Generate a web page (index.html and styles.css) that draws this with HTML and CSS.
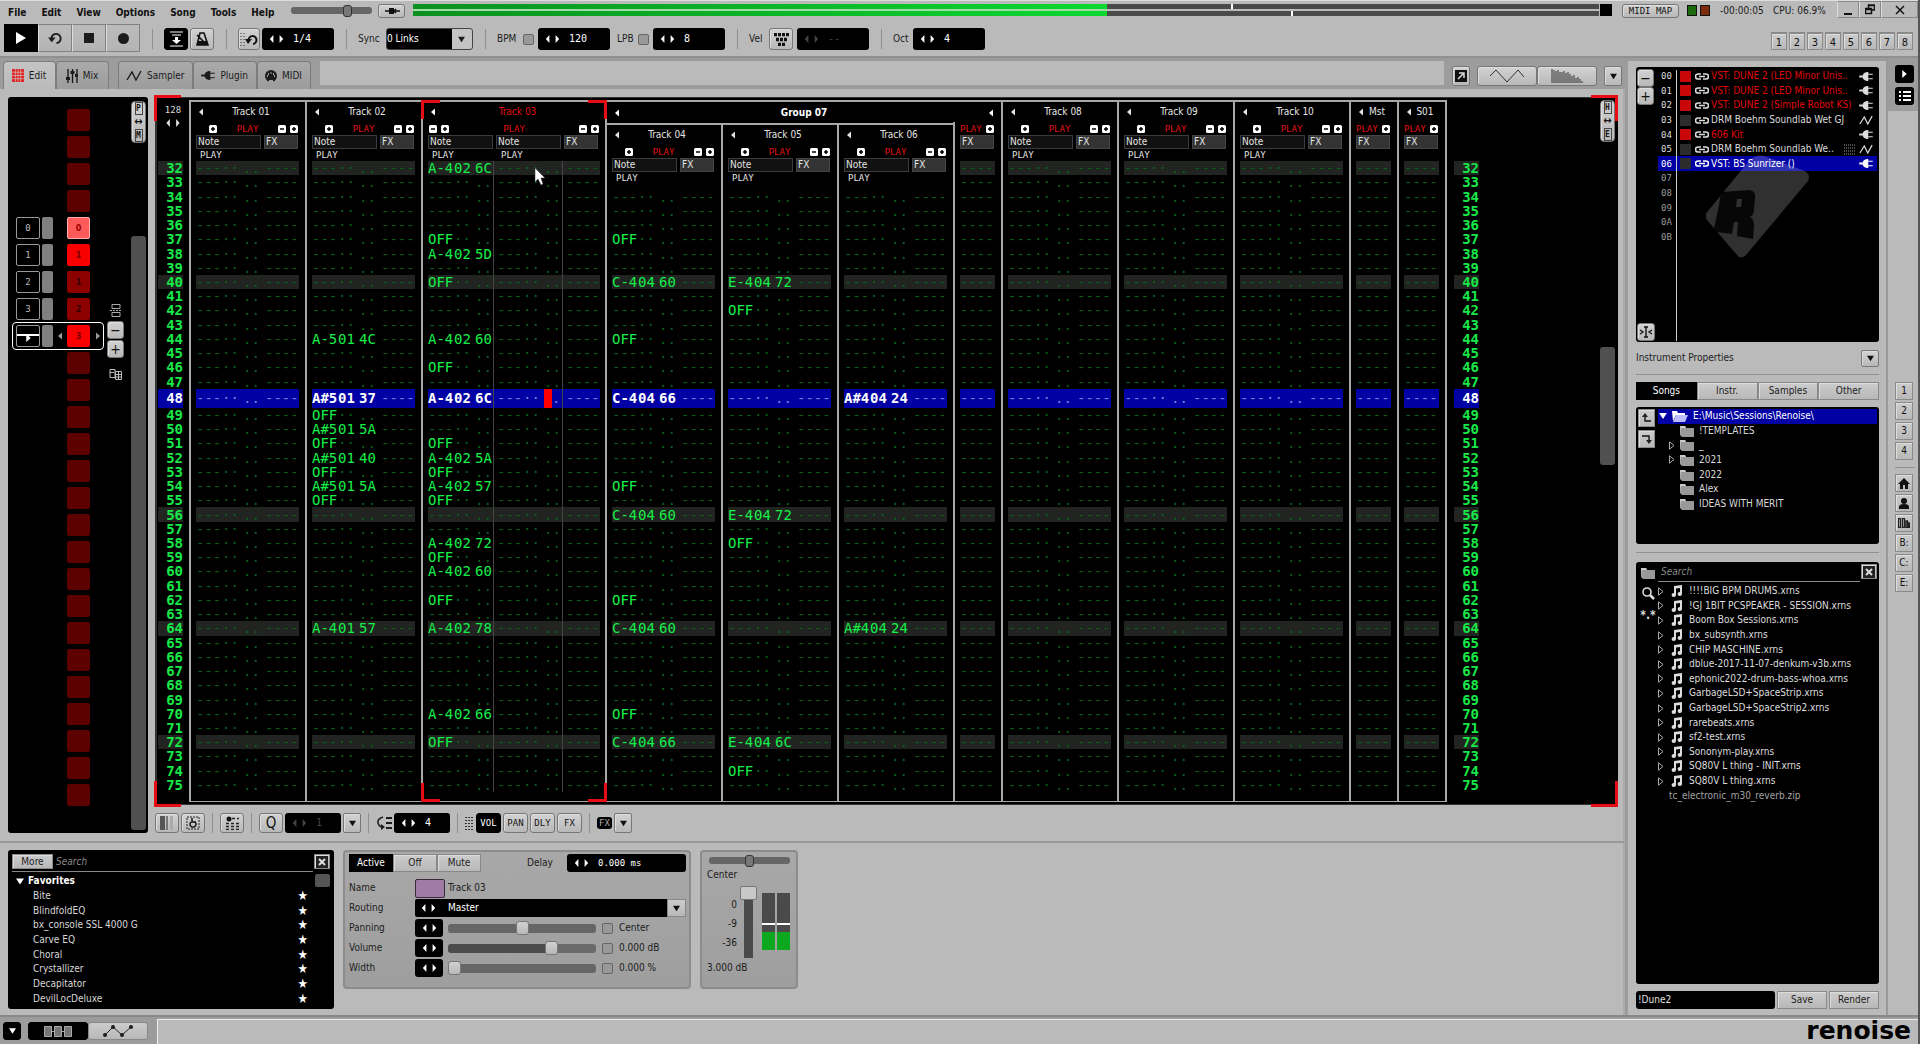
FILE: index.html
```html
<!DOCTYPE html>
<html lang="en">
<head>
<meta charset="utf-8">
<title>Renoise</title>
<link rel="stylesheet" href="styles.css">
</head>
<body>
<svg class="defs" aria-hidden="true">
  <symbol id="tl" viewBox="0 0 5 9"><path d="M5 0v9L0 4.500z"/></symbol>
  <symbol id="tr" viewBox="0 0 5 9"><path d="M0 0v9l5-4.500z"/></symbol>
  <symbol id="td" viewBox="0 0 9 7"><path d="M0 0h9L4.500 7z"/></symbol>
  <symbol id="lr" viewBox="0 0 15 9"><path d="M4 0v9L0 4.500zM11 0v9l4-4.500z"/></symbol>
  <symbol id="plug" viewBox="0 0 15 10"><path d="M0 4h4V3c1-2 3-3 5-3h1v2h5v1h-5v4h5v1h-5v2H9C7 10 5 9 4 7V6H0z"/></symbol>
  <symbol id="wave" viewBox="0 0 16 12"><path d="M1 10L6 2l4 8 5-9" fill="none" stroke="currentColor" stroke-width="1.400"/></symbol>
  <symbol id="link" viewBox="0 0 14 7"><path d="M6 1H3a2 2 0 0 0 0 5h3M8 1h3a2 2 0 0 1 0 5H8M4 3.500h6" fill="none" stroke="currentColor" stroke-width="1.600"/></symbol>
  <symbol id="folder" viewBox="0 0 14 12"><path d="M0 1h5l1 2h8v9H2L0 10z" fill="#999"/><path d="M0 1h5l1 2H1v7z" fill="#ccc"/></symbol>
  <symbol id="open" viewBox="0 0 16 12"><path d="M0 1h5l1 2h7v2H4l-3 6z" fill="#fff"/><path d="M4 5h12l-3 7H1z" fill="#bcbcff"/></symbol>
  <symbol id="note" viewBox="0 0 12 12"><path d="M4 1l8-1v9a2.200 2 0 1 1-2-2V3L6 3.500V10a2.200 2 0 1 1-2-2z"/></symbol>
  <symbol id="exp" viewBox="0 0 6 9"><path d="M.5.800v7.400L5 4.500z" fill="none" stroke="#aaa"/></symbol>
  <symbol id="x" viewBox="0 0 12 12"><path d="M0 0h12v12H0z"/><path d="M3 3l6 6M9 3l-6 6" stroke="#ddd" stroke-width="2"/></symbol>
  <symbol id="loop" viewBox="0 0 16 14"><path d="M4 9A5 5 0 1 1 9 12" fill="none" stroke="currentColor" stroke-width="2"/><path d="M0 6h8l-4 5z"/></symbol>
  <symbol id="min" viewBox="0 0 8 8"><rect width="8" height="8" rx="1.500" fill="#fff"/><path d="M2 4h4" stroke="#000" stroke-width="1.500"/></symbol>
  <symbol id="plus" viewBox="0 0 8 8"><rect width="8" height="8" rx="1.500" fill="#fff"/><path d="M2 4h4M4 2v4" stroke="#000" stroke-width="1.500"/></symbol>
  <symbol id="grid" viewBox="0 0 11 12"><path d="M0 0h11v12H0z"/><path d="M3 0v12M5.500 0v12M8 0v12M0 3h11M0 6h11M0 9h11" stroke="#ccc" stroke-width=".6"/></symbol>
</svg>

<header class="menubar">
  <nav class="menu"><button>File</button><button>Edit</button><button>View</button><button>Options</button><button>Song</button><button>Tools</button><button>Help</button></nav>
  <input class="range master" type="range" value="72" aria-label="Master volume">
  <button class="btn small wide" aria-label="Audio device"><svg width="16" height="8"><path d="M1 4h5M10 4h6M12 2l-2 2 2 2" stroke="#111" fill="none" stroke-width="1.500"/><rect x="5" y="1" width="5" height="6"/></svg></button>
  <div class="meter"><i class="track"><b></b><s style="left:69%"></s></i><i class="track"><b></b><s style="left:74%"></s></i></div>
  <div class="clip"></div>
  <button class="btn small midimap">MIDI MAP</button>
  <div class="lamps"><i></i><i class="red"></i></div>
  <span class="time">-00:00:05</span><span class="cpu">CPU: 06.9%</span>
  <div class="window"><button aria-label="Minimize"><svg width="10" height="10"><path d="M1 9h8" stroke="#111" stroke-width="2"/></svg></button><button aria-label="Restore"><svg width="10" height="11"><path d="M3.500 4V1h6v5H7M.5 4.500h6v5h-6zM3 1.500h6M1 5.500h5" fill="none" stroke="#111" stroke-width="1.500"/></svg></button><button aria-label="Close" class="close"><svg width="10" height="10"><path d="M1 1l8 8M9 1L1 9" stroke="#111" stroke-width="1.500"/></svg></button></div>
</header>

<section class="toolbar">
  <div class="transport"><button class="on" aria-label="Play"><svg width="10" height="12"><path d="M0 0v12l10-6z" fill="#fff"/></svg></button><button aria-label="Loop"><svg width="15" height="13"><use href="#loop"/></svg></button><button aria-label="Stop"><svg width="10" height="10"><path d="M0 0h10v10H0z"/></svg></button><button aria-label="Record"><svg width="11" height="11"><circle cx="5.500" cy="5.500" r="5.500"/></svg></button></div>
  <i class="sep"></i>
  <div class="grp g2"><button class="btn on" aria-label="Follow"><svg width="13" height="16"><path d="M0 1h13M2 4h9M0 15h13" stroke="#fff"/><path d="M5 6h3v3h3l-4.500 4L2 9h3z" fill="#fff"/></svg></button><button class="btn" aria-label="Metronome"><svg width="13" height="14"><path d="M4 1h4l4 12H1zM1 3l8 8" fill="none" stroke="#111" stroke-width="1.600"/><path d="M2 9h9l1 4H1z"/></svg></button></div>
  <i class="sep"></i>
  <div class="grp g2"><button class="btn narrow" aria-label="Block loop"><svg width="18" height="15"><path d="M1 1v13M4 1v13" stroke="#333" stroke-dasharray="1 2"/><path d="M9 10a4 4 0 1 1 4 2" fill="none" stroke="#111" stroke-width="2"/><path d="M5 7h7l-4 5z"/></svg></button><span class="spin"><button aria-label="Step"><svg width="15" height="8"><use href="#lr"/></svg></button><input value="1/4" aria-label="Loop size"></span></div>
  <i class="sep"></i>
  <div class="grp"><label class="l23" for="sync">Sync</label><span class="combo"><select id="sync"><option>0 Links</option></select><svg width="7" height="7"><use href="#td"/></svg></span></div>
  <i class="sep"></i>
  <div class="grp"><label class="l22" for="bpm">BPM</label><input type="checkbox" aria-label="BPM automation"><span class="spin"><button aria-label="Change BPM"><svg width="15" height="8"><use href="#lr"/></svg></button><input id="bpm" value="120"></span></div>
  <div class="grp lpb"><label class="l18" for="lpb">LPB</label><input type="checkbox" aria-label="LPB automation"><span class="spin"><button aria-label="Change LPB"><svg width="15" height="8"><use href="#lr"/></svg></button><input id="lpb" value="8"></span></div>
  <i class="sep"></i>
  <div class="grp"><label class="l16" for="vel">Vel</label><button class="btn" aria-label="Keyboard velocity"><svg width="15" height="13"><path d="M0 1.500h15M2 6.500h11M4 11.500h7" stroke="#111" stroke-width="3.500" stroke-dasharray="3 1"/></svg></button><span class="spin off"><button aria-label="Change velocity"><svg width="15" height="8"><use href="#lr"/></svg></button><input id="vel" value="--"></span></div>
  <i class="sep"></i>
  <div class="grp"><label class="l16" for="oct">Oct</label><span class="spin"><button aria-label="Change octave"><svg width="15" height="8"><use href="#lr"/></svg></button><input id="oct" value="4"></span></div>
  <div class="presets"><button>1</button><button>2</button><button>3</button><button>4</button><button>5</button><button>6</button><button>7</button><button>8</button></div>
</section>

<div class="workspace">
  <main class="left">
    <div class="tabband">
      <div class="tabs"><button class="tab sel"><svg class="red" width="12" height="13"><use href="#grid"/></svg>Edit</button><button class="tab"><svg width="12" height="14"><path d="M2 0v14M6.500 0v14M11 0v14" stroke="#111" stroke-width="1.300"/><path d="M0 8h4v3H0zM4.500 2h4v3h-4zM9 5h3v3H9z"/></svg>Mix</button></div>
      <div class="tabs"><button class="tab"><svg width="16" height="12"><use href="#wave"/></svg>Sampler</button><button class="tab"><svg width="14" height="9"><use href="#plug"/></svg>Plugin</button><button class="tab"><svg width="12" height="12"><circle cx="6" cy="6" r="6"/><path d="M2 6h1M3 4h1M5.500 3h1M8 4h1M9 6h1M4 11h4" stroke="#ccc" stroke-width="1.500"/></svg>MIDI</button></div>
      <div class="info"></div>
      <div class="scopes"><button class="btn sq" aria-label="Detach"><svg width="12" height="12"><path d="M0 0h12v12H0z"/><path d="M3 9l5-5M4 3h5v5" fill="none" stroke="#ddd" stroke-width="1.500"/></svg></button><span class="pair"><button class="btn" aria-label="Scope"><svg width="36" height="14"><path d="M1 7l6-6 11 12 11-12 6 7" fill="none" stroke="#333"/></svg></button><button class="btn" aria-label="Spectrum"><svg width="32" height="14"><path d="M1 0v14M3 1v13M5 2v12M7 1v13M9 3v11M11 3v11M13 2v12M15 4v10M17 3v11M19 5v9M21 7v7M23 6v8M25 9v5M27 8v6M29 10v4M31 12v2" stroke="#333"/></svg></button></span><button class="btn dd" aria-label="More"><svg width="7" height="7"><use href="#td"/></svg></button></div>
    </div>

    <div class="editarea">
      <aside class="seq">
        <div class="slots" id="slots"></div>
        <div class="seqtools"><svg width="12" height="15" fill="none" stroke="#aaa"><path d="M2 1.500h8v4H2zM2 9.500h8v4H2z"/><path d="M0 7.500h12" stroke-dasharray="2 1"/></svg><button class="btn">−</button><button class="btn">+</button><svg width="14" height="12" fill="none" stroke="#bbb"><path d="M1 1.500h5v8H1zM1 4.500h4M6.500 3.500h6v8h-6zM6 6.500h7M6 9h7M9.500 3v8"/></svg></div>
        <div class="seqscroll"><button class="btn flip" aria-label="Pattern matrix"><span>P</span><em>↔</em><span>M</span></button><i></i></div>
      </aside>
      <div class="pattern">
        <section class="editor">
          <div class="tracks" id="tracks"></div>
          <div class="scroll"><button class="btn flip" aria-label="Headers"><span>H</span><em>↔</em><span>E</span></button><i></i></div>
          <b class="c tl"></b><b class="c tr"></b><b class="c bl"></b><b class="c br"></b>
        </section>
        <div class="pbar">
          <button class="btn" aria-label="Show matrix"><svg width="14" height="14"><path d="M0 0h5v14H0z" fill="#555"/><path d="M6 0h2v14H6z" fill="#777"/><path d="M10 0h3v14h-3z" fill="#aaa"/></svg></button><button class="btn" aria-label="Show options"><svg width="14" height="14"><path d="M1 1h12v12H1z" fill="none" stroke="#222" stroke-dasharray="2 1"/><path d="M5 6a3 3 0 1 0 4 0M6 2v4h4" fill="none" stroke="#111" stroke-width="1.500"/></svg></button>
          <i class="sep"></i>
          <button class="btn" aria-label="Advanced edit"><svg width="13" height="14"><circle cx="3" cy="3" r="2.500"/><path d="M6 2.500h7M0 7.500h13M0 10.500h13M0 13.500h13" stroke="#222" stroke-width="1.500" stroke-dasharray="3 2"/></svg></button>
          <i class="sep"></i>
          <button class="btn q">Q</button><span class="spin off"><button aria-label="Quantize"><svg width="15" height="8"><use href="#lr"/></svg></button><input value="1" aria-label="Quantize lines"></span><button class="btn dd" aria-label="Quantize menu"><svg width="7" height="7"><use href="#td"/></svg></button>
          <i class="sep"></i>
          <svg width="16" height="14"><path d="M7 1Q1 3 2 7q1 4 5 4" fill="none" stroke="#222" stroke-width="1.600"/><path d="M5 8l4 3-4 3zM10 1h6v2h-6zM10 6h6v2h-6zM10 11h6v2h-6z"/></svg><span class="spin"><button aria-label="Edit step"><svg width="15" height="8"><use href="#lr"/></svg></button><input value="4" aria-label="Edit step"></span>
          <i class="sep"></i>
          <svg width="9" height="14"><path d="M0 1.500h9M0 4.500h9M0 7.500h9M0 10.500h9M0 13.500h9" stroke="#333" stroke-dasharray="2 1"/></svg><button class="btn pix on">VOL</button><button class="btn pix">PAN</button><button class="btn pix">DLY</button><button class="btn pix">FX</button>
          <i class="sep"></i>
          <span class="fxicon pix">FX</span><button class="btn dd" aria-label="FX menu"><svg width="7" height="7"><use href="#td"/></svg></button>
        </div>
      </div>
    </div>

    <div class="bottom">
      <section class="favs">
        <div class="search"><button class="flat">More</button><input placeholder="Search" aria-label="Search devices"><button class="flat xb" aria-label="Clear"><svg width="12" height="12"><use href="#x"/></svg></button></div>
        <ul><li class="head"><svg width="8" height="7"><use href="#td"/></svg>Favorites</li><li>Bite<b>★</b></li><li>BlindfoldEQ<b>★</b></li><li>bx_console SSL 4000 G<b>★</b></li><li>Carve EQ<b>★</b></li><li>Choral<b>★</b></li><li>Crystallizer<b>★</b></li><li>Decapitator<b>★</b></li><li>DevilLocDeluxe<b>★</b></li></ul>
        <i class="thumb"></i>
      </section>
      <section class="card dsp">
        <div class="line first"><div class="seg"><button class="on">Active</button><button>Off</button><button>Mute</button></div><label for="delay">Delay</label><span class="spin"><button aria-label="Change delay"><svg width="15" height="8"><use href="#lr"/></svg></button><input id="delay" value="0.000 ms"></span></div>
        <div class="line"><label for="tname">Name</label><button class="swatch" aria-label="Track colour"></button><input id="tname" class="bare" value="Track 03"></div>
        <div class="line"><label for="route">Routing</label><span class="route"><svg width="15" height="8"><use href="#lr"/></svg><select id="route"><option>Master</option></select><i><svg width="7" height="7"><use href="#td"/></svg></i></span></div>
        <div class="line"><label for="pan">Panning</label><button class="lrb" aria-label="Step panning"><svg width="15" height="8"><use href="#lr"/></svg></button><input class="range fat" id="pan" type="range" value="50"><input type="checkbox" aria-label="Automate panning"><span>Center</span></div>
        <div class="line"><label for="volu">Volume</label><button class="lrb" aria-label="Step volume"><svg width="15" height="8"><use href="#lr"/></svg></button><input class="range fat vol" id="volu" type="range" value="72"><input type="checkbox" aria-label="Automate volume"><span>0.000 dB</span></div>
        <div class="line"><label for="wid">Width</label><button class="lrb" aria-label="Step width"><svg width="15" height="8"><use href="#lr"/></svg></button><input class="range fat" id="wid" type="range" value="0"><input type="checkbox" aria-label="Automate width"><span>0.000 %</span></div>
      </section>
      <section class="card post">
        <input class="range postpan" type="range" value="50" aria-label="Post panning"><span>Center</span>
        <div class="fader"><div class="scale"><span>0</span><span>-9</span><span>-36</span></div><input class="vert" type="range" value="100" aria-label="Post volume"><div class="vu"><i></i><i></i></div></div>
        <span>3.000 dB</span>
      </section>
    </div>
  </main>

  <aside class="right">
    <section class="insts">
      <div class="pm"><button class="btn">−</button><button class="btn">+</button></div>
      <svg class="mark" viewBox="0 0 103 104" width="103" height="104"><path d="M42 8q7-8 16-6l41 15q6 4 3 10L40 101q-5 5-9 0L1 66q-3-5 1-9z" fill="#fff" fill-opacity=".19"/><path d="M15 38l29-2q6 1 5 8l-1 12q0 5-4 7 4 2 4 8l-1 14-16-3 1-14h-4l-2 12-16-2-3 1 6-28zM31 45l-1 8h5l1-8z" fill="#000" fill-opacity=".85"/></svg>
      <ol id="insts"></ol>
      <button class="btn caret" aria-label="Rename"><svg width="14" height="12"><path d="M1 4l3 2-3 2M13 4l-3 2 3 2M5 1h4M5 11h4M7 1v10" fill="none" stroke="#111" stroke-width="1.400"/></svg></button>
    </section>
    <div class="prop"><span>Instrument Properties</span><button class="btn dd" aria-label="Expand"><svg width="7" height="7"><use href="#td"/></svg></button></div>
    <div class="seg browse"><button class="on">Songs</button><button>Instr.</button><button>Samples</button><button>Other</button></div>
    <section class="tree">
      <div class="nav"><button class="flat" aria-label="Up"><svg width="10" height="10"><path d="M3 2v6h6" fill="none" stroke="#111" stroke-width="1.400"/><path d="M0 4l3-4 3 4z"/></svg></button><button class="flat" aria-label="Down"><svg width="10" height="10"><path d="M0 2h7v5" fill="none" stroke="#111" stroke-width="1.400"/><path d="M4 6l3 4 3-4z"/></svg></button></div>
      <ul>
        <li class="root"><svg width="8" height="6"><use href="#td"/></svg><svg width="16" height="12"><use href="#open"/></svg>E:\Music\Sessions\Renoise\</li>
        <li><i></i><svg width="14" height="12"><use href="#folder"/></svg>!TEMPLATES</li>
        <li><i><svg width="6" height="9"><use href="#exp"/></svg></i><svg width="14" height="12"><use href="#folder"/></svg>_</li>
        <li><i><svg width="6" height="9"><use href="#exp"/></svg></i><svg width="14" height="12"><use href="#folder"/></svg>2021</li>
        <li><i></i><svg width="14" height="12"><use href="#folder"/></svg>2022</li>
        <li><i></i><svg width="14" height="12"><use href="#folder"/></svg>Alex</li>
        <li><i></i><svg width="14" height="12"><use href="#folder"/></svg>IDEAS WITH MERIT</li>
      </ul>
    </section>
    <section class="files">
      <div class="fside"><svg width="14" height="12"><use href="#folder"/></svg><svg width="13" height="13"><circle cx="5" cy="5" r="4" fill="none" stroke="#ddd" stroke-width="1.600"/><path d="M8 8l4 4" stroke="#ddd" stroke-width="2.500"/></svg><span>*.*</span></div>
      <div class="fmain"><div class="search"><input placeholder="Search" aria-label="Search files"><button class="flat xb" aria-label="Clear"><svg width="12" height="12"><use href="#x"/></svg></button></div><ul id="files"></ul></div>
    </section>
    <div class="save"><input value="!Dune2" aria-label="File name"><button class="flat">Save</button><button class="flat">Render</button></div>
  </aside>

  <aside class="strip">
    <div class="dark"><button aria-label="Collapse"><svg width="5" height="8"><use href="#tr"/></svg></button><button aria-label="List"><svg width="12" height="12"><path d="M0 2h2M4 2h8M0 6h2M4 6h8M0 10h2M4 10h8" stroke="#fff" stroke-width="2"/></svg></button></div>
    <div class="quick"><button>1</button><button>2</button><button>3</button><button>4</button><hr><button aria-label="Home"><svg width="12" height="11"><path d="M6 0l6 6h-2v5H7V7H5v4H2V6H0z"/></svg></button><button aria-label="User"><svg width="12" height="11"><circle cx="6" cy="3" r="3"/><path d="M1 11V9q0-3 5-3t5 3v2z"/></svg></button><button aria-label="Library"><svg width="12" height="10"><path d="M.5.500h2v9h-2zM4.500.500h2v9h-2zM8 3h1.500v6.500H8zM10.500 5h1v4.500h-1z" fill="none" stroke="#222" stroke-width="1.300"/></svg></button><button>B:</button><button>C:</button><button>E:</button></div>
  </aside>
</div>

<footer class="status">
  <div class="views"><button class="blk" aria-label="Toggle lower panel"><svg width="7" height="8"><use href="#td"/></svg></button><button class="on" aria-label="Devices"><svg width="29" height="11" fill="#777" stroke="#aaa"><path d="M.5.500h7v10h-7zM10.500.500h7v10h-7zM20.500.500h7v10h-7zM7 5.500h3M17 5.500h3"/></svg></button><button aria-label="Automation"><svg width="30" height="12"><path d="M2 10l8-8 9 8 9-8" fill="none" stroke="#222"/><circle cx="2" cy="10" r="2"/><circle cx="10" cy="2" r="2"/><circle cx="19" cy="10" r="2"/><circle cx="28" cy="2" r="2"/></svg></button></div>
  <div class="msg"><span class="logo">renoise</span></div>
</footer>
<script src="app.js"></script>
</body>
</html>
```
FILE: styles.css
```css
:root { --ui: "DejaVu Sans Condensed", "DejaVu Sans", sans-serif; --mono: "DejaVu Sans Mono", monospace; --bg: #bababa; --mid: #9c9c9c; --edge: #858585; --lite: #cfcfcf; }
* { box-sizing: border-box; }
body { margin: 0; height: 100vh; display: flex; flex-direction: column; background: var(--bg); font: 10px/14px var(--ui); color: #1c1c1c; overflow: hidden; border-right: 2px solid #555; fill: currentColor; }
button, input, select { font: inherit; color: inherit; padding: 0; margin: 0; border: 0; background: none; border-radius: 0; min-width: 0; outline: 0; }
button { display: flex; align-items: center; justify-content: center; flex: none; white-space: nowrap; }
ul, ol { list-style: none; margin: 0; padding: 0; }
svg { flex: none; display: block; }
i { font-style: normal; }
.defs { position: absolute; width: 0; height: 0; }
.pix { font: 9px/12px var(--mono); }
.btn { height: 22px; width: 24px; border: 1px solid #777; border-radius: 3px; background: linear-gradient(#d2d2d2, #b8b8b8); box-shadow: inset 1px 1px #ddd; color: #111; }
.btn.on { background: #000; color: #fff; box-shadow: none; border-color: #000; }
.btn.dd { width: 18px; border-radius: 2px; }
.btn.narrow { width: 22px; }
.flat { background: linear-gradient(#ccc, #b8b8b8); border: 1px solid #8a8a8a; color: #222; box-shadow: inset 1px 1px #ddd; }
.sep { width: 1px; height: 20px; background: #909090; margin: 0 12px; flex: none; }
.red { color: #e02020; }

.menubar { height: 22px; flex: none; display: flex; align-items: flex-start; padding-top: 3px; border-top: 1px solid #ddd; }
.menu { display: flex; gap: 15px; padding-left: 8px; width: 291px; font-weight: bold; color: #111; }
.menu button { height: 18px; }
input.range { appearance: none; height: 7px; background: #666; border-radius: 3px; }
input.range::-webkit-slider-thumb { appearance: none; width: 9px; height: 12px; border-radius: 3px; background: #777; border: 1px solid #333; }
.master { width: 81px; margin: 3px 6px 0 0; }
.btn.small { height: 14px; }
.btn.wide { width: 27px; margin-right: 8px; }
.meter { flex: 1; display: grid; gap: 2px; height: 12px; background: linear-gradient(to right, #a0dca6 58.5%, #bababa 58.5%); }
.track { display: block; background: #4a4a4a; position: relative; }
.meter .track b { display: block; height: 100%; width: 58.5%; background: linear-gradient(to right, #0c9020, #0cd830); }
.track s { position: absolute; width: 2px; top: 0; bottom: 0; background: #fff; }
.clip { width: 12px; height: 12px; background: #000; margin: 0 10px 0 1px; }
.midimap { width: 57px; margin-right: 8px; font: 9px/12px var(--mono); }
.lamps { display: flex; gap: 3px; margin-top: 1px; }
.lamps i { width: 10px; height: 11px; background: #1c6a0c; border: 1px solid #111; }
.lamps .red { background: #7c2c0c; }
.time { margin: 0 9px 0 10px; width: 44px; }
.cpu { width: 64px; }
.time, .cpu { white-space: nowrap; }
.window { display: flex; margin-top: -3px; margin-left: auto; }
.window button { width: 22px; height: 17px; border: 1px solid #888; border-left-color: #ddd; }
.window .close { width: 37px; }

.toolbar { height: 34px; flex: none; display: flex; align-items: center; padding: 0 5px 0 4px; }
.transport { display: flex; margin-top: -2px; }
.transport button { width: 34px; height: 28px; border: 1px solid #808080; border-left-color: #ddd; background: linear-gradient(#bcbcbc, #b4b4b4); }
.transport .on { background: #000; border-color: #000; }
.grp { display: flex; align-items: center; gap: 4px; }
.g2 { gap: 2px; }
.lpb { margin-left: 7px; }
.toolbar .sep { margin: 0 11px 0 12px; }
.spin { display: flex; align-items: center; width: 72px; height: 22px; background: #000; border-radius: 3px; color: #fff; font-family: var(--mono); flex: none; }
.spin button { width: 29px; }
.spin input { flex: 1; width: 30px; padding-left: 2px; }
.spin.off { color: #444; }
.l23 { width: 24px; } .l22 { width: 22px; } .l18 { width: 17px; } .l16 { width: 16px; }
.combo { position: relative; display: flex; width: 87px; height: 22px; background: linear-gradient(to right, #000 65px, #c4c4c4 65px); border: 1px solid #444; border-radius: 3px; }
.combo select { appearance: none; color: #fff; width: 64px; }
.combo option, .route option { background: #000; }
.combo svg { position: absolute; right: 7px; top: 7px; }
input[type=checkbox] { appearance: none; width: 11px; height: 11px; border: 1px solid #666; border-radius: 2px; background: #999; flex: none; }
.presets { margin: 4px 0 0 auto; display: flex; gap: 2px; }
.presets button, .quick button { width: 16px; height: 18px; border: 1px solid #8a8a8a; background: linear-gradient(#ccc, #b8b8b8); box-shadow: inset 1px 1px #ddd; font-size: 11px; color: #111; }
.presets button { border-top-width: 2px; padding-top: 3px; }

.workspace { flex: 1; min-height: 0; display: flex; background: var(--mid); border-top: 2px solid #909090; }
.left { flex: 1; min-width: 0; display: flex; flex-direction: column; }
.tabband { height: 31px; flex: none; display: flex; padding: 3px 6px 0 3px; }
.tabs { display: flex; margin-right: 9px; }
.tab { height: 28px; gap: 5px; padding: 0 8px 0 7px; border: 1px solid #7c7c7c; border-bottom: 0; border-radius: 4px 4px 0 0; background: linear-gradient(#aaa, #9c9c9c); min-width: 53px; }
.tab.sel { background: linear-gradient(#c4c4c4, var(--bg)); }
.info { flex: 1; height: 24px; background: var(--bg); margin-right: 8px; }
.scopes { display: flex; gap: 7px; padding-top: 5px; align-items: flex-start; }
.scopes .btn { height: 20px; width: 60px; }
.scopes .sq, .scopes .dd { width: 18px; height: 20px; border-radius: 2px; }
.pair { display: flex; }

.editarea { flex: 1; min-height: 0; display: flex; background: var(--bg); margin-right: 3px; padding: 8px 5px 8px 8px; border-right: 2px solid #aaa; border-bottom: 2px solid #999; }
.seq { background: #000; width: 140px; border-radius: 3px; display: flex; margin-right: 7px; flex: none; padding-left: 8px; }
.slots { width: 88px; display: flex; flex-direction: column; gap: 5px; padding-top: 12px; margin-right: 3px; }
.slot { display: grid; grid-template-columns: 24px 11px 10px 23px 12px; column-gap: 2px; height: 22px; position: relative; justify-items: center; align-items: center; color: #bbb; font: 9px/12px var(--mono); }
.slot span, .slot i, .slot b { width: 100%; height: 22px; border-radius: 2px; display: grid; place-items: center; }
.slot span { border: 1px solid #999; grid-column: 1; }
.slot i { background: #808080; grid-column: 2; }
.slot b { background: #5c0000; grid-column: 4; color: #300; font-weight: bold; font-family: var(--ui); }
.slot b.mid { background: #8c0000; }
.slot b.hot { background: #f80000; color: #700; }
.slot b.sel { background: #ff5a5a; border: 1px solid #ffb0b0; color: #900; }
.slot svg { color: #999; }
.slot.cur::after { content: ""; position: absolute; inset: -3px 0 -3px -4px; border: 1px solid #fff; border-radius: 4px; }
.slot.cur span { background: linear-gradient(transparent 8px, #fff 8px, #fff 10px, transparent 10px); }
.slot.cur span svg { color: #fff; margin-top: 4px; }
.seqtools { width: 17px; margin-right: 7px; padding-top: 206px; display: flex; flex-direction: column; align-items: center; gap: 1px; }
.seqtools > svg:last-child { margin-top: 9px; }
.seqtools > svg { margin-bottom: 2px; }
.seqtools .btn, .pm .btn { width: 17px; height: 18px; font-size: 14px; }
.seqscroll { width: 15px; padding: 4px 0 3px; display: flex; flex-direction: column; }
.flip { width: 15px; height: 42px; flex-direction: column; border-radius: 4px; font: bold 8px/11px var(--mono); }
.flip em { font: bold 11px/14px var(--ui); }
.flip span { border: 1px solid #444; width: 8px; }
.seqscroll i { flex: 1; margin-top: 93px; background: #505050; border-radius: 3px; }

.pattern { flex: 1; min-width: 0; display: flex; flex-direction: column; gap: 8px; }
.editor { flex: 1; min-height: 0; background: #000; border: 2px solid #333; border-width: 1px 0 1px 2px; position: relative; display: flex; padding: 2px 0; }
.tracks { flex: 1; display: flex; min-width: 0; }
.c { position: absolute; width: 27px; height: 26px; border: 0 solid #e80c14; pointer-events: none; }
.c.tl { left: -3px; top: -3px; border-width: 3px 0 0 3px; }
.c.tr { right: 0; top: -3px; border-width: 3px 3px 0 0; }
.c.bl { left: -3px; bottom: -3px; border-width: 0 0 3px 3px; }
.c.br { right: 0; bottom: -3px; border-width: 0 3px 3px 0; }
.scroll { width: 15px; margin-right: 3px; }
.scroll i { display: block; height: 118px; background: #505050; border-radius: 3px; margin-top: 205px; }
.nums { width: 32px; display: flex; flex-direction: column; padding-bottom: 10px; flex: none; color: #18e848; font: 14px/14px var(--mono); }
.nums.end { padding-left: 6px; }
.nums header { height: 61px; color: #ddd; font: 9px/18px var(--mono); display: flex; flex-direction: column; align-items: center; padding-top: 1px; flex: none; }
.nums .row { width: 25px; margin-left: 1px; justify-content: flex-end; -webkit-text-stroke: 0; font-weight: bold; }
.rows { flex: 1; min-height: 0; display: flex; flex-direction: column; }
.row { flex: 1 1 0; min-height: 0; display: flex; align-items: center; white-space: pre; }
.row.beat { background: #212421; }
.row.now { flex: 0 0 19px; background: #0000a4; color: #fff; font-weight: bold; }
.trk { flex: none; border-left: 2px solid #a8a8a8; border-top: 2px solid #a8a8a8; border-bottom: 1px solid #a8a8a8; display: flex; flex-direction: column; padding: 0 6px 9px 5px; width: 116px; position: relative; }
.trk.two { width: 184px; padding-right: 5px; }
.trk.fx { width: 48px; }
.trk.last { width: 50px; border-right: 2px solid #a8a8a8; }
.hd { height: 59px; flex: none; color: #e4e4e4; font-size: 10px; }
.title { height: 20px; display: flex; align-items: center; padding-left: 3px; }
.title span { flex: 1; text-align: center; }
.ctl { height: 13px; display: flex; align-items: center; justify-content: space-between; color: #e01010; }
.ctl b { font-weight: normal; }
.ctl > span { display: flex; gap: 4px; min-width: 21px; justify-content: flex-end; }
.ctl > span:last-child { padding-right: 1px; }
.fx .ctl > span { min-width: 0; }
.names { display: flex; margin-right: 1px; }
.names > span { width: 65px; margin-right: 3px; height: 14px; border: 1px solid #3c3c3c; background: #111; padding-left: 1px; line-height: 12px; }
.names > .fxn { width: 34px; margin: 0; background: #333; border-color: #444; }
.play2 { display: flex; padding-left: 4px; height: 12px; align-items: center; }
.play2 span { width: 69px; }
.rows.notes { font: 14px/14px var(--mono); color: #14f048; }
.col { width: 69px; display: flex; flex: none; height: 100%; align-items: center; }
.col span, .f { flex: none; }
.col .n { width: 26px; } .col .i { width: 21px; }
.two .col { border-right: 1px solid #444; width: 66px; margin-right: 3px; }
.d { color: #0a5e1c; }
.now .d { color: #7080dc; font-weight: normal; }
.cursor { background: #f00; height: 19px; width: 8px; }
.group { flex: none; width: 396px; display: grid; grid-template-columns: 116px 116px 116px 48px; grid-template-rows: 21px 1fr; border-top: 2px solid #a8a8a8; }
.gtitle { grid-column: 1 / -1; border-left: 2px solid #a8a8a8; display: flex; align-items: center; justify-content: space-between; padding: 0 8px; color: #fff; font-weight: bold; }
.group .trk:not(.fx) .rows { margin-top: -23px; }
.group .trk:not(.fx) .row:nth-child(-n+2) { visibility: hidden; }
.group .fx { border-top: 0; margin-top: -1px; }
.group .fx .title { display: none; }
.group .fx .hd { height: 39px; }
.trk.active .title { color: #e01010; }
.trk.active .title svg { color: #fff; }
.trk.active::before, .trk.active::after { content: ""; position: absolute; left: -2px; right: -2px; height: 19px; pointer-events: none; z-index: 1; }
.trk.active::before { top: -2px; background: linear-gradient(#e80c14, #e80c14) 0 0 / 3px 100% no-repeat, linear-gradient(#e80c14, #e80c14) 100% 0 / 3px 100% no-repeat, linear-gradient(#e80c14, #e80c14) 0 0 / 19px 3px no-repeat, linear-gradient(#e80c14, #e80c14) 100% 0 / 19px 3px no-repeat; }
.trk.active::after { bottom: -1px; background: linear-gradient(#e80c14, #e80c14) 0 0 / 3px 100% no-repeat, linear-gradient(#e80c14, #e80c14) 100% 0 / 3px 100% no-repeat, linear-gradient(#e80c14, #e80c14) 0 100% / 19px 3px no-repeat, linear-gradient(#e80c14, #e80c14) 100% 100% / 19px 3px no-repeat; }
.mouse { position: absolute; left: 111px; top: 66px; z-index: 2; }

.pbar { height: 20px; display: flex; align-items: center; gap: 2px; }
.pbar .btn { height: 20px; }
.pbar .btn.pix { width: 25px; }
.pbar .sep { margin: 0 5px; }
.pbar .spin { width: 56px; height: 20px; }
.pbar .q { font-size: 15px; }
.fxicon { background: #000; color: #aaa; border-radius: 3px; width: 15px; text-align: center; }

.bottom { flex: none; background: var(--bg); display: flex; gap: 9px; padding: 7px 8px 6px; height: 172px; margin-right: 3px; align-items: flex-start; border-right: 2px solid #aaa; }
.favs { width: 326px; height: 159px; background: #000; border-radius: 3px; color: #d8d8d8; padding: 4px; position: relative; }
.search { display: flex; height: 18px; border-bottom: 1px solid #888; padding-bottom: 2px; margin-right: 17px; }
.search .flat { width: 41px; }
.search input { flex: 1; padding-left: 3px; font-style: italic; }
.search input::placeholder { color: #8a8a8a; }
.search .xb { width: 16px; margin-right: -17px; }
.favs ul { height: 132px; display: grid; grid-auto-rows: 1fr; margin-top: 2px; }
.favs li { display: flex; align-items: center; padding: 0 22px 0 21px; justify-content: space-between; }
.favs li.head { padding-left: 4px; gap: 4px; justify-content: flex-start; font-weight: bold; color: #fff; }
.favs li b { font-size: 13px; color: #fff; }
.thumb { position: absolute; right: 4px; top: 24px; width: 15px; height: 13px; background: #555; border-radius: 2px; }
.card { border: 2px solid #8c8c8c; border-radius: 4px; background: linear-gradient(#a8a8a8, #9e9e9e); height: 139px; }
.dsp { width: 348px; padding: 1px 3px 0 4px; display: flex; flex-direction: column; }
.line { height: 20px; display: flex; align-items: center; }
.line label { width: 66px; }
.line.first { margin-bottom: 5px; gap: 0; }
.first label { width: 40px; margin-left: 46px; }
.first .spin { width: 119px; height: 18px; margin-left: auto; font-size: 9px; }
.seg { display: flex; }
.seg button { width: 44px; height: 18px; background: linear-gradient(#ccc, #b8b8b8); border: 1px solid #888; box-shadow: inset 1px 1px #ddd; }
.seg .on { background: #000; color: #fff; border-color: #000; box-shadow: none; }
.swatch { width: 30px; height: 19px; background: #a07ca4; border: 1px solid #3a2a3c; border-radius: 2px; margin-right: 3px; }
.bare { width: 100px; }
.route { flex: 1; height: 18px; background: #000; color: #fff; display: flex; align-items: center; padding-left: 6px; border-radius: 2px; }
.route select { appearance: none; flex: 1; padding-left: 12px; color: #fff; }
.route i { width: 19px; height: 18px; display: grid; place-items: center; background: linear-gradient(#ccc, #b8b8b8); color: #111; border: 1px solid #888; }
.lrb { width: 28px; height: 18px; background: #000; color: #fff; border-radius: 3px; margin-right: 5px; }
input.fat { width: 148px; height: 9px; margin-right: 6px; }
input.vol { background: linear-gradient(to right, #4c4c4c 70%, #6a6a6a 70%); }
input.fat::-webkit-slider-thumb { width: 13px; height: 14px; background: linear-gradient(#d0d0d0, #b8b8b8); border-color: #777; }
.line input[type=checkbox] { margin-right: 6px; }
.post { width: 98px; padding: 5px 6px 0 5px; display: flex; flex-direction: column; }
.postpan { width: 81px; align-self: flex-end; margin-bottom: 4px; }
.fader { display: flex; height: 72px; margin: 4px 0 3px; }
.scale { width: 33px; padding: 12px 3px 0 0; display: flex; flex-direction: column; gap: 5px; text-align: right; }
.vert { writing-mode: vertical-lr; direction: rtl; appearance: none; width: 17px; height: 72px; background: linear-gradient(to right, transparent 4px, #4a4a4a 4px, #4a4a4a 13px, transparent 13px); border-radius: 3px; }
.vert::-webkit-slider-thumb { appearance: none; width: 17px; height: 14px; border: 1px solid #777; border-radius: 2px; background: #c8c8c8; }
.vu { display: flex; gap: 2px; margin: 7px 0 0 5px; }
.vu i { width: 13px; height: 57px; background: linear-gradient(#4a4a4a 30px, #fff 30px, #fff 32px, #4a4a4a 32px, #4a4a4a 39px, #0ca820 39px); }

.right { width: 260px; flex: none; background: var(--bg); margin-top: 3px; padding: 6px 7px 6px 8px; display: flex; flex-direction: column; border-right: 2px solid #999; }
.insts { height: 275px; background: #000; border-radius: 3px; position: relative; display: flex; flex: none; padding: 2px 2px 0 0; }
.pm { width: 22px; padding-left: 1px; }
.caret { position: absolute; left: 1px; bottom: 1px; width: 18px; height: 18px; }
.mark { position: absolute; left: 70px; top: 87px; z-index: 1; }
.insts ol { flex: 1; height: 175px; display: grid; grid-auto-rows: 1fr; color: #ddd; position: relative; }
.insts ol::after { content: ""; position: absolute; left: 18px; top: 1px; height: 271px; width: 1px; background: #ccc; }
.insts li { display: flex; align-items: center; gap: 4px; padding: 0 4px 0 3px; font-size: 10px; }
.insts li > span { width: 15px; font: 9px/12px var(--mono); }
.insts li i { width: 11px; height: 11px; background: #2c2c2c; }
.insts li em { font-style: normal; flex: 1; white-space: nowrap; margin-left: -2px; }
.insts li.muted em { color: #e00808; }
.insts li.muted i { background: #c80808; }
.insts li.cur { background: #0000a4; color: #fff; }
.insts li.empty { color: #999; }
.prop { height: 33px; display: flex; justify-content: space-between; align-items: center; border-bottom: 1px solid #909090; flex: none; }
.prop .btn { height: 17px; }
.browse { margin: 7px 0; flex: none; }
.browse button { flex: 1; height: 18px; }
.tree { height: 137px; background: #000; border-radius: 3px; display: flex; padding: 2px; color: #d8d8d8; flex: none; }
.nav { width: 20px; display: grid; gap: 3px; align-content: start; }
.nav .flat { width: 17px; height: 18px; }
.tree ul { flex: 1; height: 102px; display: grid; grid-auto-rows: 1fr; }
.tree li { display: flex; align-items: center; gap: 5px; padding-left: 11px; }
.tree li i { width: 6px; }
.tree li.root { background: #0000a4; color: #fff; padding-left: 1px; }
.files { flex: 1; min-height: 0; background: #000; border-radius: 3px; margin-top: 18px; display: flex; color: #ddd; padding: 2px; position: relative; }
.files::before { content: ""; position: absolute; left: 0; right: 0; top: -10px; height: 1px; background: #909090; }
.fside { width: 20px; display: flex; flex-direction: column; align-items: center; gap: 8px; padding-top: 3px; }
.fside span { font: bold 12px/14px var(--ui); }
.fmain { flex: 1; }
.fmain ul { height: 219px; display: grid; grid-auto-rows: 1fr; margin-top: 2px; }
.fmain li { display: flex; align-items: center; gap: 7px; }
.fmain li svg:first-child { margin-right: -1px; }
.fmain li.plain { color: #a0a0a0; padding-left: 11px; }
.save { display: flex; height: 18px; gap: 2px; margin-top: 7px; flex: none; }
.save input { flex: 1; background: #000; color: #e0e0e0; border-radius: 3px; padding-left: 2px; }
.save .flat { width: 50px; }
.strip { width: 30px; flex: none; display: flex; flex-direction: column; }
.dark { height: 53px; padding: 7px 0 0 7px; display: grid; gap: 4px; align-content: start; }
.dark button { width: 19px; height: 18px; background: #000; border-radius: 3px; color: #fff; }
.quick { flex: 1; background: var(--bg); padding: 271px 0 0 7px; display: flex; flex-direction: column; gap: 2px; }
.quick button { width: 18px; font-size: 10px; }
.quick hr { width: 20px; height: 1px; border: 0; margin: 5px 0 4px; background: #909090; }

.status { height: 29px; flex: none; display: flex; background: var(--mid); border-top: 2px solid #888; }
.views { width: 157px; padding: 5px 0 0 3px; display: flex; }
.views button { height: 18px; width: 60px; background: linear-gradient(#ccc, #b8b8b8); border: 1px solid #888; border-radius: 3px; }
.views .blk { width: 18px; background: #000; margin-right: 7px; border-color: #000; color: #fff; }
.views .on { background: #000; border-color: #000; }
.msg { flex: 1; margin-top: 2px; border-top: 1px solid #eee; border-left: 1px solid #eee; background: var(--bg); display: flex; justify-content: flex-end; padding-right: 7px; }
.logo { font: bold 25px/22px "DejaVu Sans", sans-serif; color: #000; }
```
FILE: app.js
```js
const FIRST = 32, LAST = 75, CURRENT = 48;

const notes = {
  2: "44 A-5 01 4C|48 A#5 01 37|49 OFF|50 A#5 01 5A|51 OFF|52 A#5 01 40|53 OFF|54 A#5 01 5A|55 OFF|64 A-4 01 57",
  3: "32 A-4 02 6C|37 OFF|38 A-4 02 5D|40 OFF|44 A-4 02 60|46 OFF|48 A-4 02 6C|51 OFF|52 A-4 02 5A|53 OFF|54 A-4 02 57|55 OFF|58 A-4 02 72|59 OFF|60 A-4 02 60|62 OFF|64 A-4 02 78|70 A-4 02 66|72 OFF",
  4: "37 OFF|40 C-4 04 60|44 OFF|48 C-4 04 66|54 OFF|56 C-4 04 60|62 OFF|64 C-4 04 60|70 OFF|72 C-4 04 66",
  5: "40 E-4 04 72|42 OFF|56 E-4 04 72|58 OFF|72 E-4 04 6C|74 OFF",
  6: "48 A#4 04 24|64 A#4 04 24"
};

const icon = (id, w, h) => `<svg width="${w}" height="${h}"><use href="#${id}"/></svg>`;
const rowClass = r => "row" + (r === CURRENT ? " now" : r % 8 === 0 ? " beat" : "");

function rows(make, cls = "") {
  let out = `<div class="rows ${cls}">`;
  for (let r = FIRST; r <= LAST; r++) out += `<div class="${rowClass(r)}">${make(r)}</div>`;
  return out + "</div>";
}

function parse(text) {
  const map = {};
  (text || "").split("|").forEach(s => { const [r, ...v] = s.split(" "); map[r] = v; });
  return map;
}

function cell(v = []) {
  const part = (cls, s, blank) => `<span class="${cls}${s ? "" : " d"}">${s || blank}</span>`;
  return `<div class="col">${part("n", v[0], "---")}${part("i", v[1], "··")}${part("v", v[2], "..")}</div>`;
}

function track(n, name, kind = "", extra = "") {
  const data = parse(notes[n]);
  const fx = kind === "fx", two = kind === "two";
  const left = fx ? "" : `<span>${two ? icon("min", 8, 8) : ""}${icon("plus", 8, 8)}</span>`;
  const right = `<span>${fx ? "" : icon("min", 8, 8)}${icon("plus", 8, 8)}</span>`;
  const noteBox = "<span>Note</span>";
  const play = '<span class="pix">PLAY</span>';
  const body = rows(r => {
    let out = "";
    if (!fx) out += cell(data[r]);
    if (two) out += r === CURRENT
      ? '<div class="col"><span class="n d">---</span><span class="i d">··</span><span class="cursor"> </span><span class="d">.</span></div>'
      : cell();
    return out + '<span class="f d">----</span>';
  }, "notes");
  return `<section class="trk ${kind} ${extra}">
    <div class="hd">
      <div class="title">${icon("tl", 4, 8)}<span>${name}</span></div>
      <div class="ctl">${left}<b class="pix">PLAY</b>${right}</div>
      <div class="names">${fx ? "" : noteBox}${two ? noteBox : ""}<span class="fxn">FX</span></div>
      <div class="play2">${fx ? "" : play}${two ? play : ""}</div>
    </div>${body}
    ${two ? '<svg class="mouse" width="11" height="17"><path d="M1 0v14l3-3 3 6 2-1-2-6h4z" fill="#fff" stroke="#333" stroke-width=".5"/></svg>' : ""}
  </section>`;
}

const numbers = (head, cls = "") =>
  `<div class="nums ${cls}"><header>${head}</header>${rows(r => r)}</div>`;

document.getElementById("tracks").innerHTML =
  numbers(`<span>128</span>${icon("lr", 14, 8)}`) +
  track(1, "Track 01") + track(2, "Track 02") + track(3, "Track 03", "two", "active") +
  `<div class="group"><div class="gtitle">${icon("tl", 4, 8)}<span>Group 07</span>${icon("tl", 4, 8)}</div>` +
  track(4, "Track 04") + track(5, "Track 05") + track(6, "Track 06") + track(7, "", "fx") + "</div>" +
  track(8, "Track 08") + track(9, "Track 09") + track(10, "Track 10") +
  track(11, "Mst", "fx") + track(12, "S01", "fx", "last") + numbers("", "end");

const slotBlocks = { 4: ["0", "sel"], 5: ["1", "hot"], 6: ["1", "mid"], 7: ["2", "mid"], 8: ["3", "hot"] };
document.getElementById("slots").innerHTML = Array.from({ length: 26 }, (_, i) => {
  const [text, cls] = slotBlocks[i] || ["", ""];
  const cur = i === 8;
  const head = i >= 4 && i <= 8 ? `<span>${cur ? icon("tr", 5, 8) : i - 4}</span><i></i>` : "";
  return `<div class="slot ${cur ? "cur" : ""}">${head}${cur ? icon("tl", 4, 8) : ""}<b class="${cls}">${text}</b>${cur ? icon("tr", 4, 8) : ""}</div>`;
}).join("");

const insts = [
  ["VST: DUNE 2 (LED Minor Unis..", "plug", 1], ["VST: DUNE 2 (LED Minor Unis..", "plug", 1],
  ["VST: DUNE 2 (Simple Robot KS)", "plug", 1], ["DRM Boehm Soundlab Wet GJ", "wave", 0],
  ["606 Kit", "plug", 1], ["DRM Boehm Soundlab We..", "wave", 0], ["VST: BS Sunrizer ()", "plug", 0]
];
document.getElementById("insts").innerHTML = Array.from({ length: 12 }, (_, i) => {
  const num = "0" + i.toString(16).toUpperCase();
  const it = insts[i];
  if (!it) return `<li class="empty"><span>${num}</span></li>`;
  const phrase = i === 5 ? '<svg width="11" height="11"><path d="M0 1h11M0 4h11M0 7h11M0 10h11" stroke="#999" stroke-dasharray="1 1"/></svg>' : "";
  return `<li class="${it[2] ? "muted" : ""} ${i === 6 ? "cur" : ""}"><span>${num}</span><i></i>${icon("link", 14, 7)}<em>${it[0]}</em>${phrase}${icon(it[1], 14, it[1] === "wave" ? 11 : 9)}</li>`;
}).join("");

const files = ["!!!!BIG BPM DRUMS", "!GJ 1BIT PCSPEAKER - SESSION", "Boom Box Sessions", "bx_subsynth", "CHIP MASCHINE",
  "dblue-2017-11-07-denkum-v3b", "ephonic2022-drum-bass-whoa", "GarbageLSD+SpaceStrip", "GarbageLSD+SpaceStrip2",
  "rarebeats", "sf2-test", "Sononym-play", "SQ80V L thing - INIT", "SQ80V L thing"];
document.getElementById("files").innerHTML =
  files.map(f => `<li>${icon("exp", 6, 9)}${icon("note", 12, 12)}${f}.xrns</li>`).join("") +
  '<li class="plain">tc_electronic_m30_reverb.zip</li>';
```
